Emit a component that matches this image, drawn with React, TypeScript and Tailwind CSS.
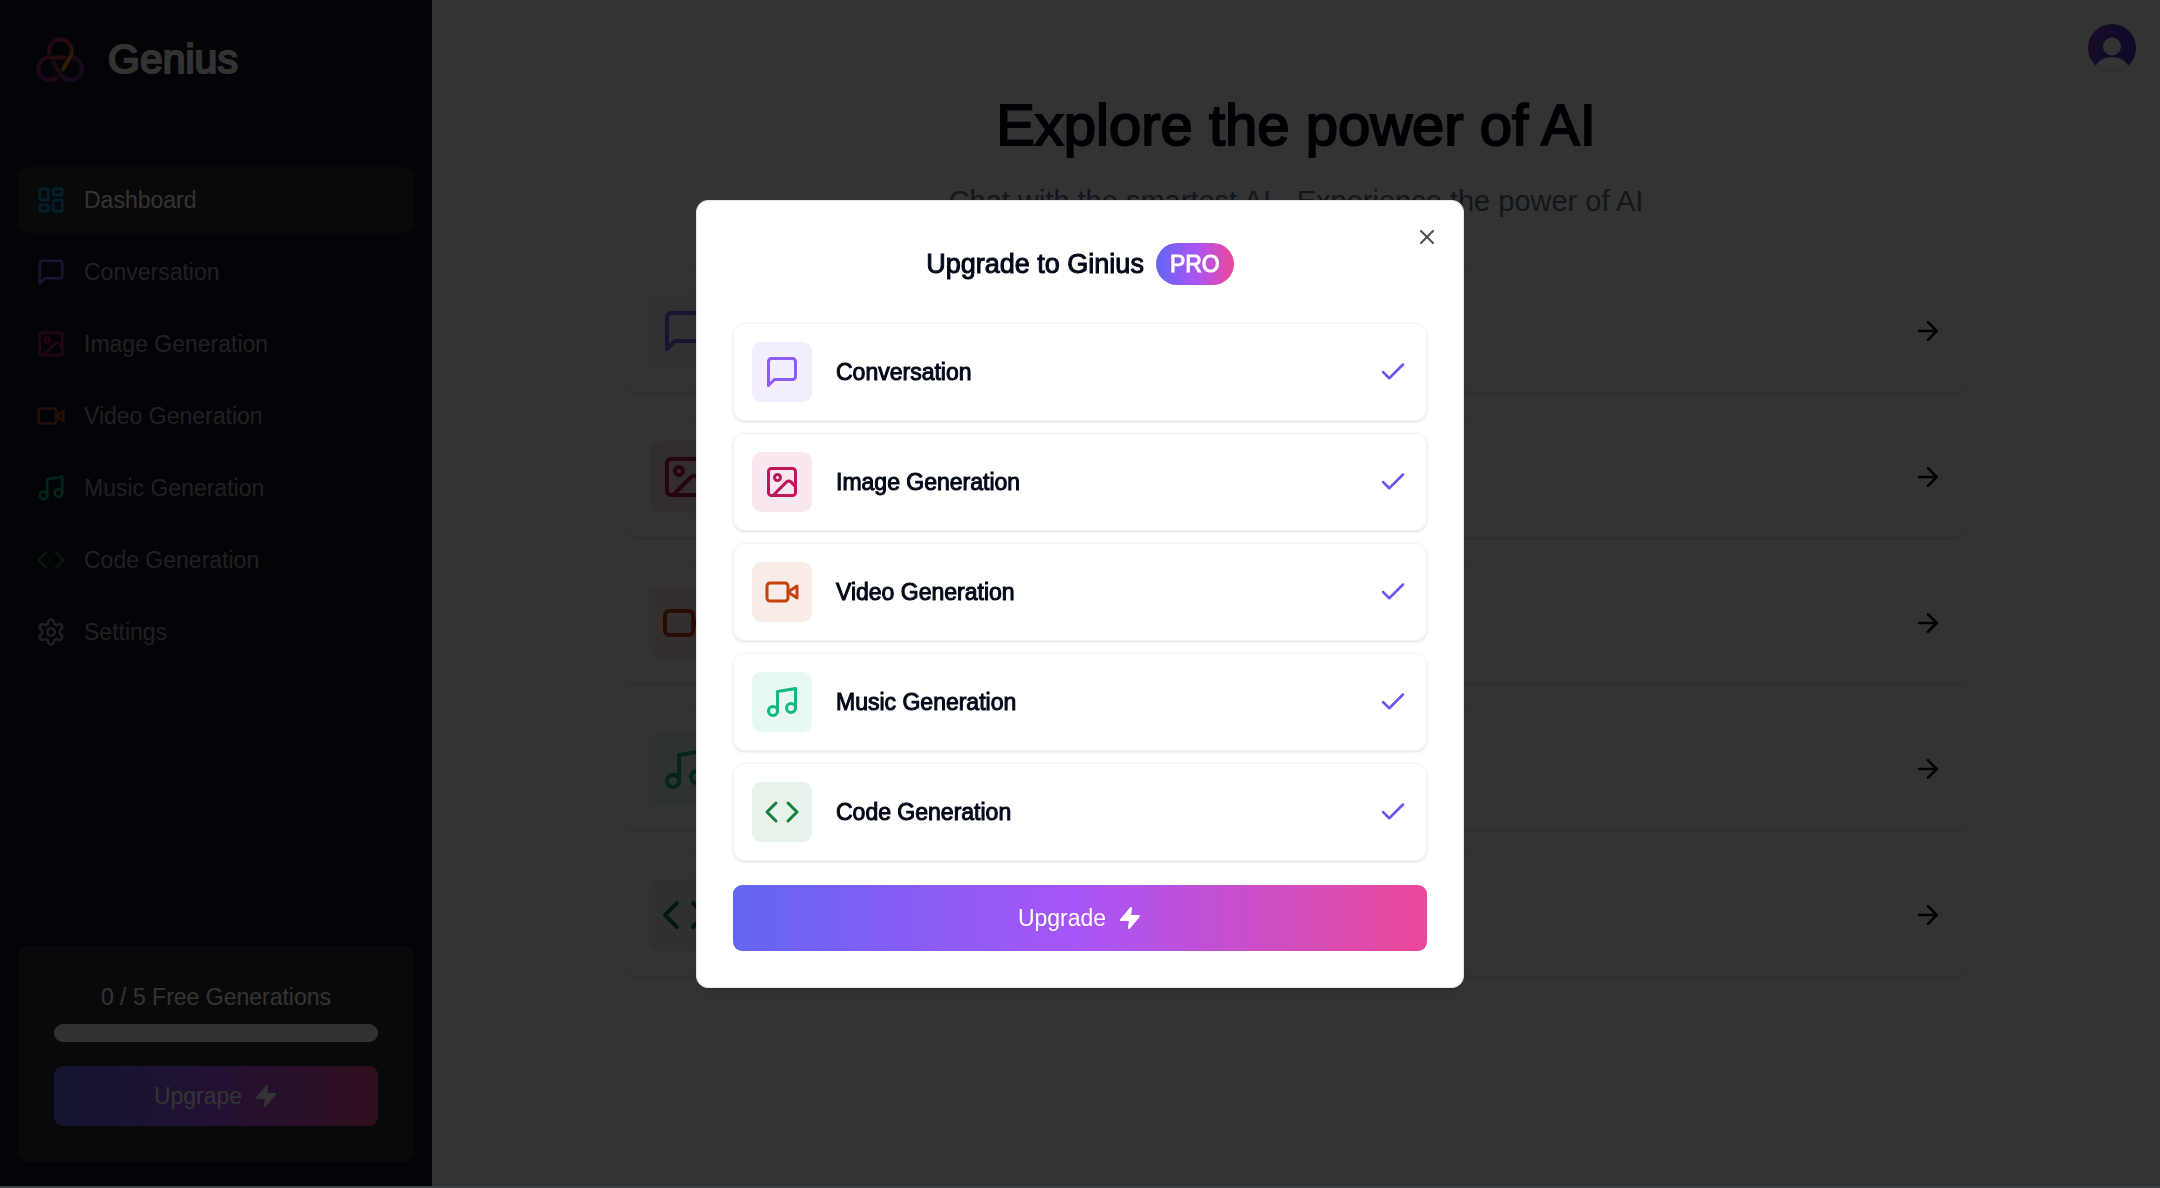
import type { ReactNode } from "react";
import { ArrowRight, Check, Code, ImageIcon, LayoutDashboard, Music, X } from "lucide-react";

type IconProps = { className?: string };

function Glyph({ className, children }: IconProps & { children: ReactNode }) {
  return (
    <svg
      viewBox="0 0 24 24"
      className={className}
      fill="none"
      stroke="currentColor"
      strokeWidth="2"
      strokeLinecap="round"
      strokeLinejoin="round"
      aria-hidden="true"
    >
      {children}
    </svg>
  );
}

function MessageSquare({ className }: IconProps) {
  return (
    <Glyph className={className}>
      <path d="M21 15a2 2 0 0 1-2 2H7l-4 4V5a2 2 0 0 1 2-2h14a2 2 0 0 1 2 2z" />
    </Glyph>
  );
}

function Video({ className }: IconProps) {
  return (
    <Glyph className={className}>
      <path d="m22 8-6 4 6 4V8Z" />
      <rect width="14" height="12" x="2" y="6" rx="2" />
    </Glyph>
  );
}

function Settings({ className }: IconProps) {
  return (
    <Glyph className={className}>
      <path d="M12.22 2h-.44a2 2 0 0 0-2 2v.18a2 2 0 0 1-1 1.73l-.43.25a2 2 0 0 1-2 0l-.15-.08a2 2 0 0 0-2.73.73l-.22.38a2 2 0 0 0 .73 2.73l.15.1a2 2 0 0 1 1 1.72v.51a2 2 0 0 1-1 1.74l-.15.09a2 2 0 0 0-.73 2.73l.22.38a2 2 0 0 0 2.73.73l.15-.08a2 2 0 0 1 2 0l.43.25a2 2 0 0 1 1 1.73V20a2 2 0 0 0 2 2h.44a2 2 0 0 0 2-2v-.18a2 2 0 0 1 1-1.73l.43-.25a2 2 0 0 1 2 0l.15.08a2 2 0 0 0 2.73-.73l.22-.39a2 2 0 0 0-.73-2.73l-.15-.08a2 2 0 0 1-1-1.74v-.5a2 2 0 0 1 1-1.74l.15-.09a2 2 0 0 0 .73-2.73l-.22-.38a2 2 0 0 0-2.73-.73l-.15.08a2 2 0 0 1-2 0l-.43-.25a2 2 0 0 1-1-1.73V4a2 2 0 0 0-2-2z" />
      <circle cx="12" cy="12" r="3" />
    </Glyph>
  );
}

function Zap({ className }: IconProps) {
  return (
    <Glyph className={className}>
      <polygon points="13 2 3 14 12 14 11 22 21 10 12 10 13 2" fill="currentColor" />
    </Glyph>
  );
}

const tools = [
  { label: "Conversation", icon: MessageSquare, color: "text-[#8b5cf6]", bg: "bg-[#8b5cf6]/10" },
  { label: "Image Generation", icon: ImageIcon, color: "text-[#be185d]", bg: "bg-[#be185d]/10" },
  { label: "Video Generation", icon: Video, color: "text-[#c2410c]", bg: "bg-[#c2410c]/10" },
  { label: "Music Generation", icon: Music, color: "text-[#10b981]", bg: "bg-[#10b981]/10" },
  { label: "Code Generation", icon: Code, color: "text-[#15803d]", bg: "bg-[#15803d]/10" },
];

const routes = [
  { label: "Dashboard", icon: LayoutDashboard, color: "text-[#0ea5e9]", active: true },
  ...tools.map((t) => ({ ...t, active: false })),
  { label: "Settings", icon: Settings, color: "text-[#a1a1aa]", active: false },
];

function Logo() {
  return (
    <svg viewBox="0 0 48 48" className="size-12" fill="none" strokeWidth="4" aria-hidden="true">
      <defs>
        <linearGradient id="logo-top" x1="0" y1="0" x2="0.8" y2="1">
          <stop offset="0" stopColor="#b0266f" />
          <stop offset="0.5" stopColor="#c82a3c" />
          <stop offset="0.85" stopColor="#e0a000" />
        </linearGradient>
        <linearGradient id="logo-left" x1="0" y1="1" x2="1" y2="0">
          <stop offset="0" stopColor="#8a2080" />
          <stop offset="1" stopColor="#c82a50" />
        </linearGradient>
        <linearGradient id="logo-right" x1="0" y1="0" x2="1" y2="0.8">
          <stop offset="0" stopColor="#b82a60" />
          <stop offset="1" stopColor="#5c3590" />
        </linearGradient>
      </defs>
      <path d="M34.7 22.4A11.3 11.3 0 1 1 26.5 41.5C23.5 38 20 32 16.5 26" stroke="url(#logo-right)" />
      <path d="M30 22.4H13.3A11.3 11.3 0 1 0 22 41.3" stroke="url(#logo-left)" />
      <path d="M13.7 19.5A11.3 11.3 0 1 1 35 19.5C33.5 23.5 29 31 26.3 35.8" stroke="url(#logo-top)" />
    </svg>
  );
}

function Sidebar() {
  return (
    <aside className="flex w-[432px] shrink-0 flex-col justify-between bg-[#111827] px-[18px] pb-6 pt-[35px] text-white">
      <div>
        <a href="#" className="mb-[84px] ml-[18px] flex h-12 items-center gap-6">
          <Logo />
          <span className="text-[41px] leading-[48px] [-webkit-text-stroke:2px]">Genius</span>
        </a>
        <nav className="flex flex-col gap-1.5">
          {routes.map(({ label, icon: Icon, color, active }) => (
            <a
              key={label}
              href="#"
              className={`flex items-center gap-[18px] rounded-xl p-[18px] ${active ? "bg-[#282d32] text-white" : "text-zinc-400"}`}
            >
              <Icon className={`size-[30px] ${color}`} />
              <span className="text-[23px] leading-[30px]">{label}</span>
            </a>
          ))}
        </nav>
      </div>
      <div className="flex flex-col rounded-xl bg-[#282d32] p-9">
        <p className="mb-3 text-center text-[23px] leading-[30px]">0 / 5 Free Generations</p>
        <div
          role="progressbar"
          aria-label="Free generations used"
          aria-valuenow={0}
          aria-valuemax={5}
          className="mb-6 h-[18px] rounded-full bg-slate-100"
        />
        <button className="flex h-[60px] items-center justify-center gap-3 rounded-[9px] bg-linear-to-r/srgb from-[#6366f1] via-[#a855f7] to-[#ec4899] text-[23px]">
          Upgrape
          <Zap className="size-6" />
        </button>
      </div>
    </aside>
  );
}

function Avatar() {
  return (
    <svg viewBox="0 0 48 48" className="size-12" aria-hidden="true">
      <defs>
        <linearGradient id="avatar" x1="0.1" y1="0.4" x2="1" y2="0.6">
          <stop offset="0" stopColor="#7035c8" />
          <stop offset="1" stopColor="#4a35c8" />
        </linearGradient>
        <clipPath id="avatar-clip">
          <circle cx="24" cy="24" r="24" />
        </clipPath>
      </defs>
      <g clipPath="url(#avatar-clip)">
        <rect width="48" height="48" fill="url(#avatar)" />
        <circle cx="24" cy="22.5" r="9" fill="#fff" />
        <path d="M7 42C11 36 17 33 24 33S37 36 41 42V48H7Z" fill="#fff" />
      </g>
    </svg>
  );
}

function Dashboard() {
  return (
    <main className="flex-1">
      <header className="flex justify-end px-6 pb-[23px] pt-6">
        <button aria-label="Account">
          <Avatar />
        </button>
      </header>
      <div className="mb-12 text-center">
        <h1 className="mb-[25px] text-[58px] leading-[60px] [-webkit-text-stroke:2px]">Explore the power of AI</h1>
        <p className="text-[29px] leading-[42px] text-slate-500">Chat with the smartest AI - Experience the power of AI</p>
      </div>
      <div className="flex flex-col gap-6 px-48">
        {tools.map(({ label, icon: Icon, color, bg }) => (
          <a
            key={label}
            href="#"
            aria-label={label}
            className="flex items-center justify-between rounded-xl border border-black/5 p-6 shadow-sm"
          >
            <span className={`rounded-[9px] p-3 ${bg}`}>
              <Icon className={`size-12 ${color}`} />
            </span>
            <ArrowRight className="size-[30px]" />
          </a>
        ))}
      </div>
    </main>
  );
}

function UpgradeDialog() {
  return (
    <div className="fixed inset-0 flex items-center justify-center bg-black/80">
      <section
        role="dialog"
        aria-modal="true"
        aria-labelledby="upgrade-title"
        className="relative w-full max-w-3xl rounded-xl border border-slate-200 bg-white p-9 shadow-lg"
      >
        <button aria-label="Close" className="absolute right-6 top-6 opacity-70">
          <X className="size-6" />
        </button>
        <h2
          id="upgrade-title"
          className="mb-9 mt-1 flex items-center justify-center gap-3 text-[27px] leading-[46px] [-webkit-text-stroke:1px]"
        >
          Upgrade to Ginius
          <span className="rounded-full bg-linear-to-r/srgb from-[#6366f1] via-[#a855f7] to-[#ec4899] px-[14px] py-1.5 text-[23px] leading-[30px] text-white [-webkit-text-stroke:1px_white]">
            PRO
          </span>
        </h2>
        <ul className="mb-6 flex flex-col gap-3">
          {tools.map(({ label, icon: Icon, color, bg }) => (
            <li key={label} className="flex items-center gap-6 rounded-xl border border-black/5 p-[18px] shadow-sm">
              <span className={`rounded-[9px] p-3 ${bg}`}>
                <Icon className={`size-9 ${color}`} />
              </span>
              <span className="flex-1 text-[23px] leading-9 [-webkit-text-stroke:1px]">{label}</span>
              <Check className="size-[30px] text-[#6d55f5]" />
            </li>
          ))}
        </ul>
        <button className="flex h-[66px] w-full items-center justify-center gap-3 rounded-[9px] bg-linear-to-r/srgb from-[#6366f1] via-[#a855f7] to-[#ec4899] text-[23px] text-white">
          Upgrade
          <Zap className="size-6" />
        </button>
      </section>
      <div className="absolute inset-x-0 bottom-0 h-0.5 bg-[#38424a]" />
    </div>
  );
}

export default function App() {
  return (
    <div className="flex min-h-screen bg-white pb-0.5 font-['Liberation_Sans',Arial,sans-serif] text-[#020817]">
      <Sidebar />
      <Dashboard />
      <UpgradeDialog />
    </div>
  );
}
